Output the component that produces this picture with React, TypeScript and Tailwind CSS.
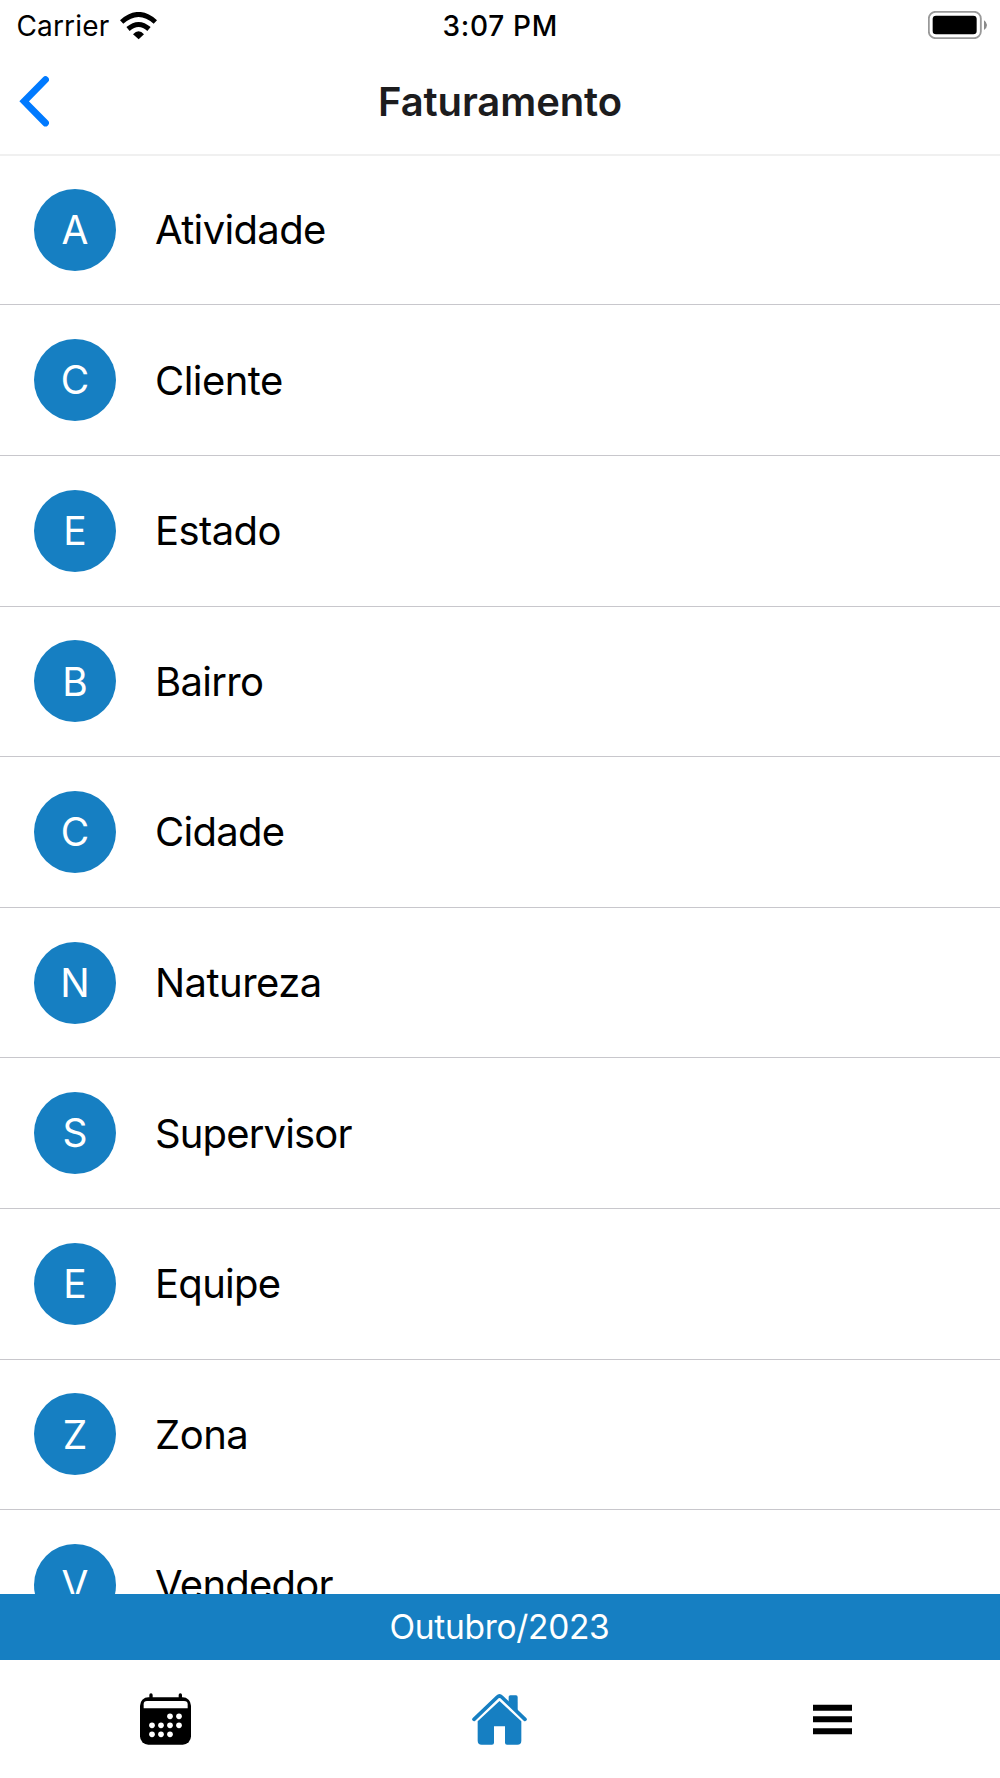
import React from 'react';

interface Category {
    readonly name: string;
    readonly tracking: string;
}

const categories: Category[] = [
    { name: 'Atividade', tracking: 'tracking-[-0.65px]' },
    { name: 'Cliente', tracking: 'tracking-[-0.55px]' },
    { name: 'Estado', tracking: 'tracking-[-0.6px]' },
    { name: 'Bairro', tracking: 'tracking-[-0.7px]' },
    { name: 'Cidade', tracking: 'tracking-[-0.7px]' },
    { name: 'Natureza', tracking: 'tracking-[-0.55px]' },
    { name: 'Supervisor', tracking: 'tracking-[-0.85px]' },
    { name: 'Equipe', tracking: 'tracking-[-0.7px]' },
    { name: 'Zona', tracking: 'tracking-[-0.5px]' },
    { name: 'Vendedor', tracking: 'tracking-[-0.75px]' },
];

const WifiIcon = () => (
    <svg className="w-[37px] h-[28px]" viewBox="360 29 111 84">
        <path d="M365 59 Q416 14 466 59" fill="none" stroke="#000" strokeWidth="15" />
        <path d="M384 80 Q416 53 447 80" fill="none" stroke="#000" strokeWidth="15" />
        <path d="M399 96 Q416 77 432 96 L416 111 Z" />
    </svg>
);

const BatteryIcon = () => (
    <svg className="w-[59px] h-[28px]" viewBox="84 30 177 84">
        <rect x="86.500" y="32.500" width="156" height="79" rx="20" fill="none" stroke="#999" strokeWidth="5.500" />
        <rect x="98" y="44" width="132" height="56" rx="10" />
        <path d="M252 58 Q261 64 261 72 Q261 81 252 87 Z" fill="#8a8a8a" />
    </svg>
);

const BackIcon = () => (
    <svg className="w-[30px] h-[51px]" viewBox="59 228 90 153">
        <path d="M138.500 239 L74.500 304 L138.500 369" fill="none" stroke="#007aff" strokeWidth="20.500" strokeLinecap="round" />
    </svg>
);

const CalendarIcon = () => (
    <svg className="w-[51px] h-[52px]" viewBox="61 69 153 156">
        <path d="M94 75 V90 M182 75 V90" stroke="#000" strokeWidth="10" strokeLinecap="round" />
        <rect x="61" y="82" width="153" height="142" rx="25" />
        <path d="M72 115 V103 Q72 93 82 93 H193 Q204 93 204 103 V115 Z" fill="#fff" />
        <g fill="#fff">
            <circle cx="151" cy="139" r="8.500" />
            <circle cx="178" cy="139" r="8.500" />
            <circle cx="97" cy="166" r="8.500" />
            <circle cx="124" cy="166" r="8.500" />
            <circle cx="151" cy="166" r="8.500" />
            <circle cx="178" cy="166" r="8.500" />
            <circle cx="97" cy="193" r="8.500" />
            <circle cx="124" cy="193" r="8.500" />
            <circle cx="151" cy="193" r="8.500" />
        </g>
    </svg>
);

const HomeIcon = () => (
    <svg className="w-[55px] h-[52px]" viewBox="65 69 165 156" fill="#167fc2">
        <path d="M175 95 V81 Q175 76 180 76 H197 Q202 76 202 81 V124 Z" />
        <path d="M71 148 L141 81 Q147.500 75 154 81 L224 148" fill="none" stroke="#167fc2" strokeWidth="11" strokeLinecap="round" />
        <path d="M147.500 93 L213 154 V212 Q213 224 201 224 H170 Q164 224 164 218 V169 H131 V218 Q131 224 125 224 H94 Q82 224 82 212 V154 Z" />
    </svg>
);

const MenuIcon = () => (
    <svg className="w-[39px] h-[31px]" viewBox="99 101 117 93">
        <path d="M99 112 H216 M99 147 H216 M99 183 H216" stroke="#000" strokeWidth="18" />
    </svg>
);

const StatusBar = () => (
    <div className="flex h-[51px] items-center justify-between pl-[16.5px] pr-[13px] text-[28px] leading-none text-black">
        <div className="flex flex-1 items-center gap-[10.5px]">
            <span className="tracking-[0.15px]">Carrier</span>
            <WifiIcon />
        </div>
        <span className="pr-[3px] font-medium tracking-[0.7px]">3:07 PM</span>
        <div className="flex flex-1 justify-end pb-[2px]">
            <BatteryIcon />
        </div>
    </div>
);

const CategoryRow = ({ name, tracking }: Category) => (
    <li className="flex h-[150.6px] shrink-0 items-center border-b border-[#c8c7cc] pl-[34px] text-[40px]">
        <div className="flex size-[82px] items-center justify-center rounded-full bg-[#167fc2] pt-px text-[39px] text-white">{name[0]}</div>
        <span className={`ml-[39px] pt-px text-black ${tracking}`}>{name}</span>
    </li>
);

function App() {
    return (
        <div className="flex h-[1778px] w-[1000px] flex-col overflow-hidden bg-white font-['Inter',sans-serif]">
            <StatusBar />
            <header className="grid h-[105px] grid-cols-[1fr_auto_1fr] items-center border-b-2 border-[#f0f0f0] px-[19px] pb-[2px]">
                <BackIcon />
                <h1 className="pt-px text-[40px] font-semibold leading-none tracking-[-0.1px] text-[#1c1c1e]">Faturamento</h1>
            </header>
            <ul className="-mt-[1.2px] flex min-h-0 flex-1 flex-col overflow-hidden">
                {categories.map(category => (
                    <CategoryRow key={category.name} {...category} />
                ))}
            </ul>
            <div className="flex h-[66px] items-center justify-center bg-[#167fc2] pr-px text-[33.5px] tracking-[-0.3px] text-white">
                <span>Outubro/2023</span>
            </div>
            <nav className="grid h-[118px] grid-cols-3 items-center justify-items-center">
                <div className="pr-[2px]"><CalendarIcon /></div>
                <HomeIcon />
                <div className="pr-[2px]"><MenuIcon /></div>
            </nav>
        </div>
    );
}

export default App;
